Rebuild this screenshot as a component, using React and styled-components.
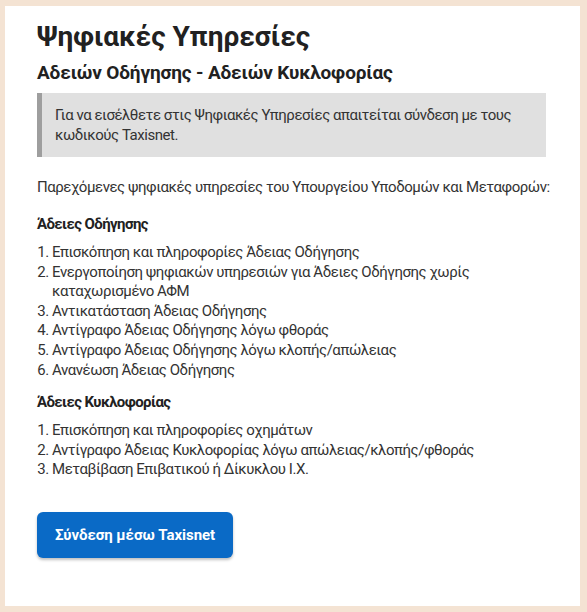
import React from "react"
import styled, { createGlobalStyle } from "styled-components"

const GlobalStyle = createGlobalStyle`
  * { box-sizing: border-box; }
  body {
    margin: 0;
    background: #f4e3d3;
    font-family: Roboto, "Liberation Sans", sans-serif;
  }
`

const Page = styled.div`
  padding: 6px 7px 6px 5px;
`

const Card = styled.main`
  background: #fff;
  padding: 13px 4px 48px 32px;
  color: #333;
`

const Title = styled.h1`
  margin: 0;
  font-size: 28px;
  line-height: 36px;
  font-weight: 700;
  color: #212121;
`

const Subtitle = styled.h2`
  margin: 6px 0 0;
  font-size: 19px;
  line-height: 24px;
  font-weight: 700;
  letter-spacing: -0.15px;
  color: #212121;
`

const Callout = styled.div`
  margin: 8px 30px 0 0;
  background: #e0e0e0;
  border-left: 5px solid #9e9e9e;
  padding: 12px 20px 12px 13px;
  font-size: 15px;
  line-height: 20px;
  letter-spacing: -0.45px;
  color: #333;
`

const Intro = styled.p`
  margin: 20px 0 0;
  font-size: 15px;
  line-height: 20px;
  letter-spacing: -0.45px;
`

const SectionTitle = styled.h3`
  margin: ${({ $first }) => ($first ? "17px" : "12px")} 0 0;
  font-size: 15px;
  line-height: 20px;
  font-weight: 700;
  letter-spacing: -0.6px;
  color: #212121;
`

const List = styled.ol`
  margin: 9px 40px 0 0;
  padding-left: 15px;
  font-size: 15px;
  line-height: 19.6px;
  letter-spacing: -0.45px;
`

const Item = styled.li``

const Button = styled.button`
  margin-top: 32px;
  width: 196px;
  height: 46px;
  border: none;
  border-radius: 6px;
  background: #0a6ac6;
  color: #fff;
  font-family: inherit;
  font-size: 15px;
  font-weight: 700;
  letter-spacing: -0.05px;
  box-shadow: 0 2px 3px rgba(0, 0, 0, 0.25);
  cursor: pointer;
`

const licences = [
  "Επισκόπηση και πληροφορίες Άδειας Οδήγησης",
  "Ενεργοποίηση ψηφιακών υπηρεσιών για Άδειες Οδήγησης χωρίς καταχωρισμένο ΑΦΜ",
  "Αντικατάσταση Άδειας Οδήγησης",
  "Αντίγραφο Άδειας Οδήγησης λόγω φθοράς",
  "Αντίγραφο Άδειας Οδήγησης λόγω κλοπής/απώλειας",
  "Ανανέωση Άδειας Οδήγησης",
]

const vehicles = [
  "Επισκόπηση και πληροφορίες οχημάτων",
  "Αντίγραφο Άδειας Κυκλοφορίας λόγω απώλειας/κλοπής/φθοράς",
  "Μεταβίβαση Επιβατικού ή Δίκυκλου Ι.Χ.",
]

export default function App() {
  return (
    <Page>
      <GlobalStyle />
      <Card>
        <Title>Ψηφιακές Υπηρεσίες</Title>
        <Subtitle>Αδειών Οδήγησης - Αδειών Κυκλοφορίας</Subtitle>
        <Callout>
          Για να εισέλθετε στις Ψηφιακές Υπηρεσίες απαιτείται σύνδεση με τους
          κωδικούς Taxisnet.
        </Callout>
        <Intro>Παρεχόμενες ψηφιακές υπηρεσίες του Υπουργείου Υποδομών και Μεταφορών:</Intro>

        <SectionTitle $first>Άδειες Οδήγησης</SectionTitle>
        <List>
          {licences.map((item) => <Item key={item}>{item}</Item>)}
        </List>

        <SectionTitle>Άδειες Κυκλοφορίας</SectionTitle>
        <List>
          {vehicles.map((item) => <Item key={item}>{item}</Item>)}
        </List>

        <Button>Σύνδεση μέσω Taxisnet</Button>
      </Card>
    </Page>
  )
}
